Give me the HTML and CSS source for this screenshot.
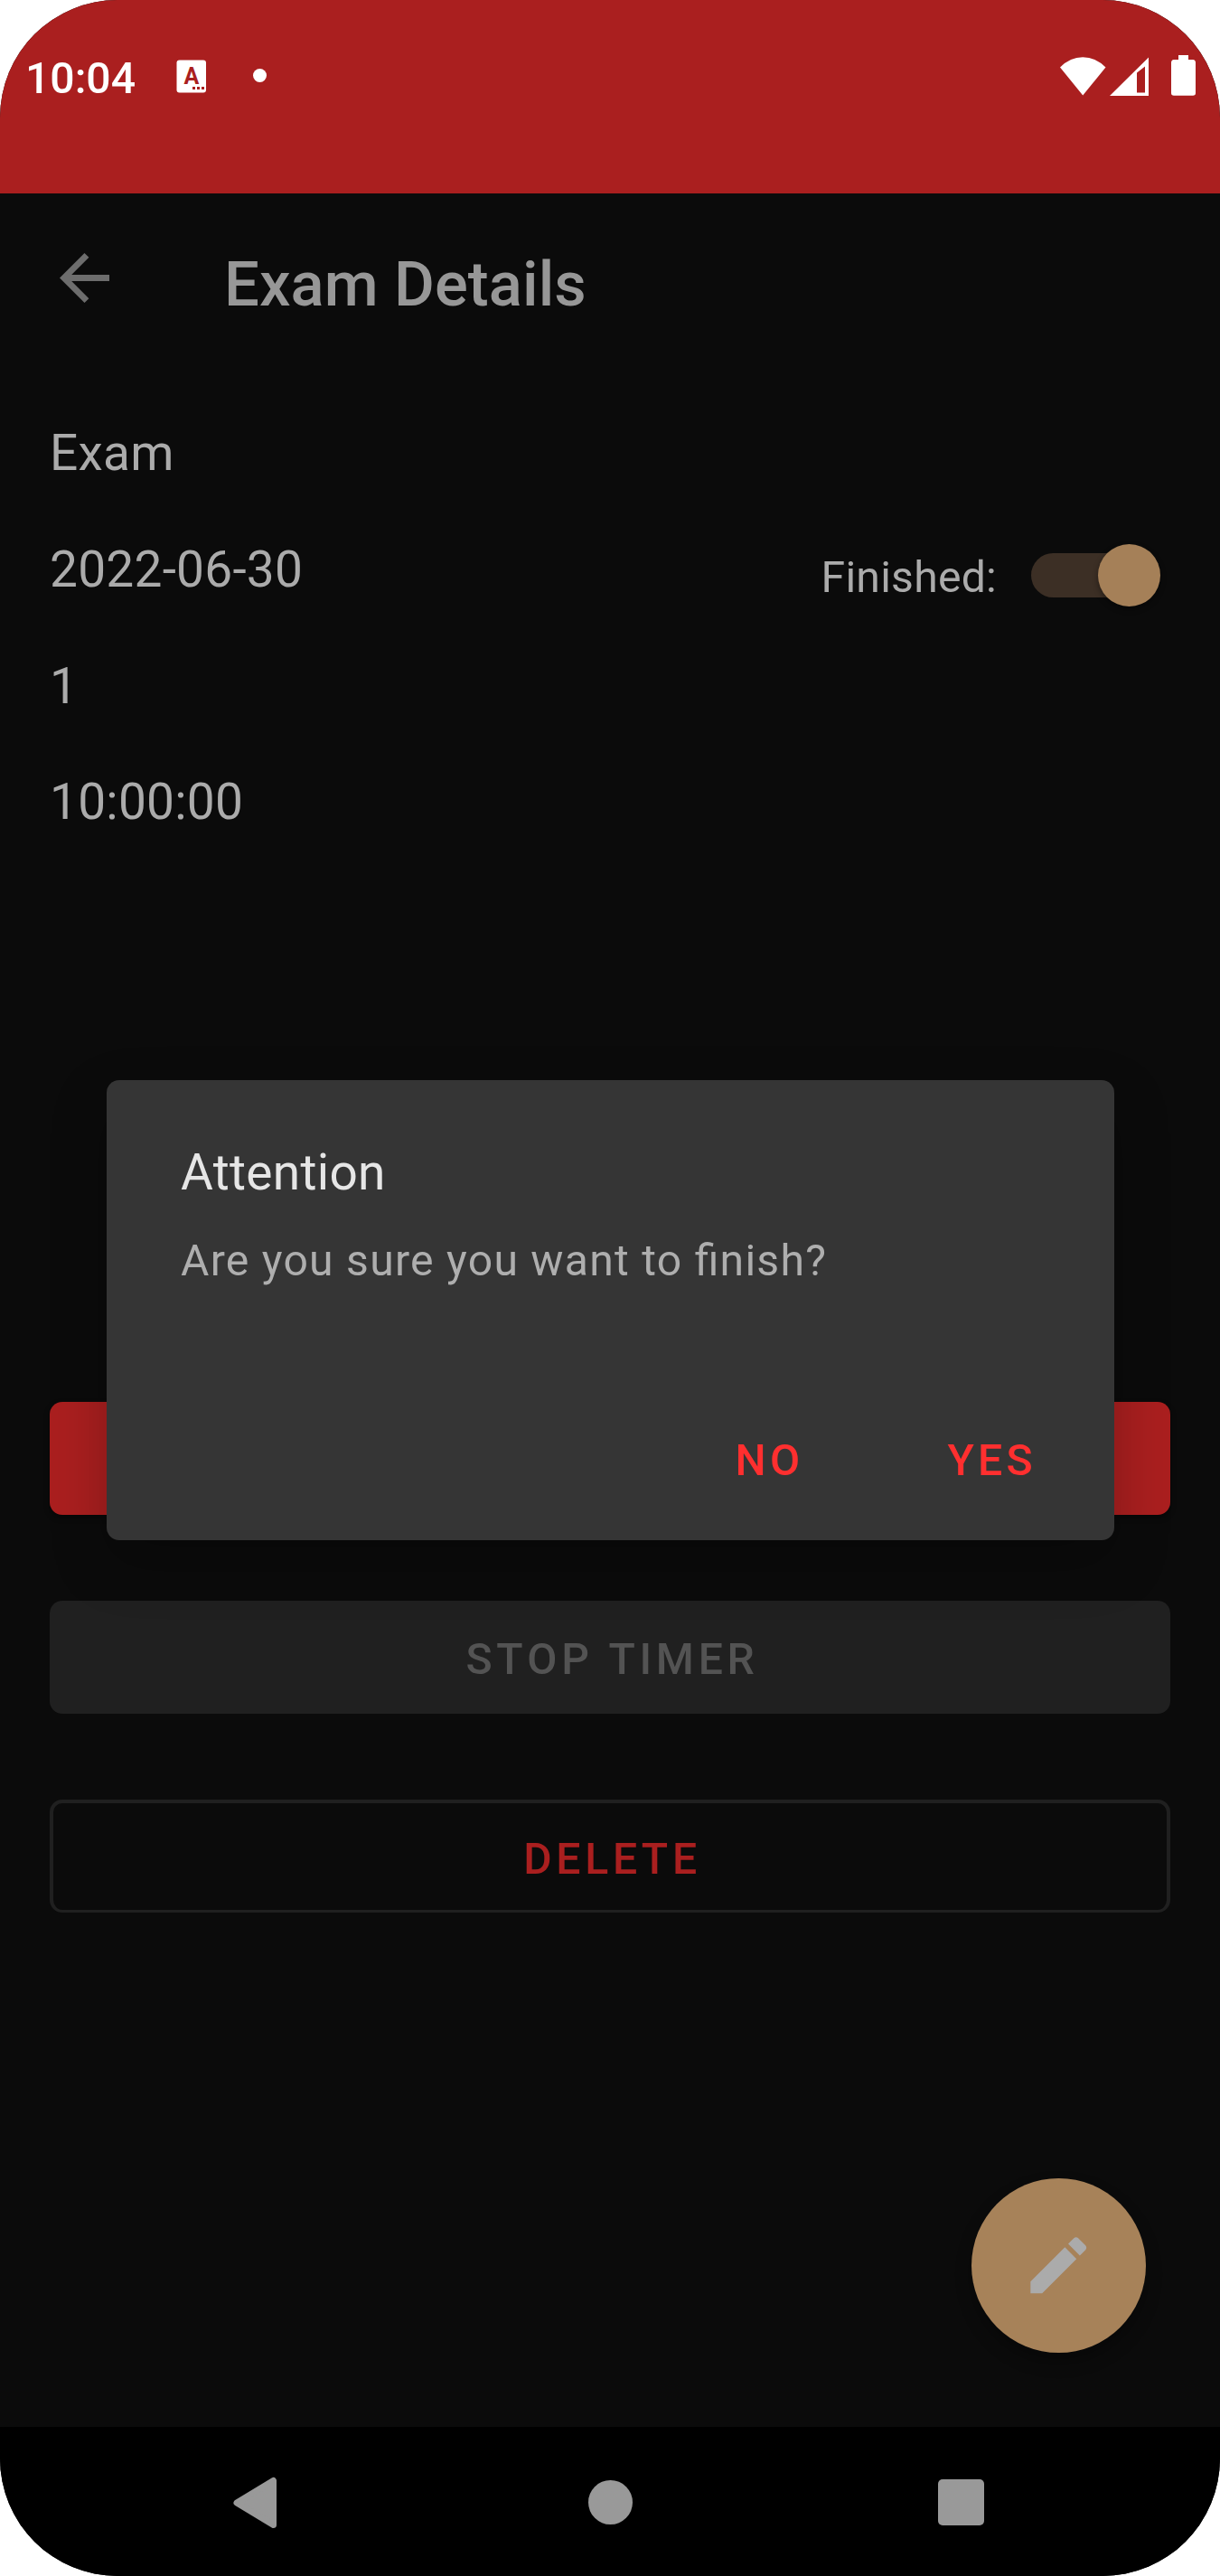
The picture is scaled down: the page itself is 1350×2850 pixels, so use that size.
FILE: index.html
```html
<!DOCTYPE html>
<html lang="en">
<head>
<meta charset="utf-8">
<title>Exam Details</title>
<link rel="stylesheet" href="styles.css">
</head>
<body>
<div class="screen">
  <header class="status">
    <span class="clock">10:04</span>
    <svg class="status-app" width="34" height="38" viewBox="0 0 34 38">
      <rect x=".5" y=".5" width="32.500" height="36" rx="3" fill="#fff"/>
      <text class="app-letter" x="17" y="26.500" text-anchor="middle">A</text>
      <path d="M18 30h3v3h-3zM23 30h3v3h-3zM28 30h3v3h-3z" fill="#aa1f1f"/>
    </svg>
    <span class="status-dot"></span>
    <svg class="status-icons" width="151" height="46" viewBox="0 0 151 46" fill="#fff">
      <path d="M0 13.500Q11 2.200 25.200 2.200T50.500 13.500L25.200 44.500Z"/>
      <path fill-rule="evenodd" d="M55 45 98 2.500V45ZM85 19.500V41.500H94V12.500Z"/>
      <path d="M123 8.500Q123 5 126 5H131V0H142V5H147Q150 5 150 8.500V42Q150 44.700 147 44.700H126Q123 44.700 123 42Z"/>
    </svg>
  </header>

  <div class="toolbar">
    <svg class="back" width="55" height="55" viewBox="4 4 16 16" fill="#6d6d6d"><path d="M20 11H7.830l5.590-5.590L12 4l-8 8 8 8 1.410-1.410L7.830 13H20v-2z"/></svg>
    <h1 class="title">Exam Details</h1>
  </div>

  <main class="content">
    <div class="row">Exam</div>
    <div class="row">
      <span>2022-06-30</span>
      <div class="finished">
        <span class="finished-label">Finished:</span>
        <div class="switch"><div class="thumb"></div></div>
      </div>
    </div>
    <div class="row">1</div>
    <div class="row">10:00:00</div>
    <div class="actions">
      <div class="button primary"></div>
      <div class="button disabled">STOP TIMER</div>
      <div class="button outlined">DELETE</div>
    </div>
  </main>

  <nav class="navbar">
    <svg width="50" height="58" viewBox="0 0 50 58"><path d="M45.500 4.500V53.500L5 29Z" fill="#999" stroke="#999" stroke-width="7" stroke-linejoin="round"/></svg>
    <div class="home"></div>
    <div class="recents"></div>
  </nav>

  <div class="fab">
    <svg width="82.500" height="82.500" viewBox="0 0 24 24" fill="#ababab"><path d="M3 17.250V21h3.750L17.810 9.940l-3.750-3.750L3 17.250zM20.710 7.040c.39-.39.39-1.020 0-1.410l-2.340-2.340c-.39-.39-1.020-.39-1.410 0l-1.830 1.830 3.750 3.750 1.830-1.830z"/></svg>
  </div>

  <div class="dialog">
    <div class="dialog-title">Attention</div>
    <div class="dialog-message">Are you sure you want to finish?</div>
    <div class="dialog-actions"><span>NO</span><span>YES</span></div>
  </div>
</div>
</body>
</html>
```
FILE: styles.css
```css
* { box-sizing: border-box; }

body {
  margin: 0;
  background: #fff;
  font-family: Roboto, "Liberation Sans", sans-serif;
}

.screen {
  position: relative;
  display: flex;
  flex-direction: column;
  width: 1350px;
  height: 2850px;
  overflow: hidden;
  border-radius: 130px;
  background: #0b0b0b;
  color: #ababab;
}

.status {
  display: flex;
  align-items: flex-start;
  height: 214px;
  padding: 61px 26px 0 28px;
  background: #aa1f1f;
  color: #fff;
}

.clock {
  width: 167px;
  font-size: 48.125px;
  font-weight: 500;
  line-height: 52px;
}

.status-app { margin-top: 5px; }

.app-letter {
  font-size: 25px;
  font-weight: 700;
  fill: #aa1f1f;
}

.status-dot {
  width: 15px;
  height: 15px;
  margin: 15px 0 0 51px;
  border-radius: 50%;
  background: #fff;
}

.status-icons { margin-left: auto; }

.toolbar {
  display: flex;
  align-items: center;
  height: 187px;
  padding-left: 66px;
}

.title {
  margin: 0 0 0 127px;
  padding-top: 14px;
  font-size: 68.75px;
  font-weight: 500;
  line-height: 80px;
  letter-spacing: .1px;
  color: #979797;
}

.content {
  flex: 1;
  padding: 36px 55px 0;
}

.row {
  display: flex;
  align-items: center;
  justify-content: space-between;
  height: 128.7px;
  font-size: 55px;
  line-height: 64px;
  letter-spacing: .25px;
}

.finished {
  display: flex;
  align-items: center;
  gap: 38px;
  padding: 12px 24px 0 0;
}

.finished-label {
  padding-top: 5px;
  font-size: 48.125px;
}

.switch {
  display: flex;
  align-items: center;
  justify-content: flex-end;
  width: 130px;
  height: 49px;
  border-radius: 25px;
  background: #3c2f25;
}

.thumb {
  flex: none;
  width: 69px;
  height: 69px;
  margin-right: -12.5px;
  border-radius: 50%;
  background: #a58058;
  box-shadow: 0 3px 6px rgba(0, 0, 0, .4);
}

.actions {
  display: flex;
  flex-direction: column;
  gap: 95px;
  margin-top: 599px;
}

.button {
  display: flex;
  align-items: center;
  justify-content: center;
  height: 125px;
  padding: 5px 0 0 5px;
  border-radius: 14px;
  font-size: 48.125px;
  font-weight: 500;
  font-kerning: none;
  letter-spacing: 4.75px;
}

.primary {
  background: #aa1f1f;
  box-shadow: 0 3px 6px rgba(0, 0, 0, .4);
}

.disabled {
  background: #202020;
  color: #535353;
}

.outlined {
  padding-top: 1px;
  border: 4px solid #202020;
  border-bottom-width: 3px;
  color: #aa1f1f;
}

.navbar {
  display: flex;
  align-items: center;
  height: 165px;
  padding: 2px 0 0 257px;
  background: #000;
}

.outlined { padding-top: 5px; }

.home {
  width: 49px;
  height: 49px;
  margin: 0 338px 0 344px;
  border-radius: 50%;
  background: #999;
}

.recents {
  width: 51px;
  height: 51px;
  border-radius: 5px;
  background: #999;
}

.fab {
  position: absolute;
  left: 1075px;
  top: 2410px;
  display: flex;
  align-items: center;
  justify-content: center;
  width: 193px;
  height: 193px;
  border-radius: 50%;
  background: #a78259;
  box-shadow: 0 10px 18px rgba(0, 0, 0, .3);
}

.dialog {
  position: absolute;
  left: 118px;
  top: 1195px;
  display: flex;
  flex-direction: column;
  width: 1115px;
  height: 509px;
  padding: 70px 82px 0;
  border-radius: 14px;
  background: #353535;
  box-shadow: 0 25px 60px rgba(0, 0, 0, .25);
}

.dialog-title {
  font-size: 55px;
  line-height: 64px;
  letter-spacing: .3px;
  color: #e6e6e6;
}

.dialog-message {
  margin-top: 38px;
  font-size: 48.125px;
  line-height: 56px;
  color: #aeaeae;
  letter-spacing: 1.26px;
  font-feature-settings: "liga" 1;
}

.dialog-actions {
  display: flex;
  justify-content: flex-end;
  gap: 159px;
  margin-top: 165px;
  padding-right: 4px;
  font-size: 48.125px;
  font-weight: 500;
  font-kerning: none;
  line-height: 56px;
  letter-spacing: .0893em;
  color: #ff2f2f;
}
```
